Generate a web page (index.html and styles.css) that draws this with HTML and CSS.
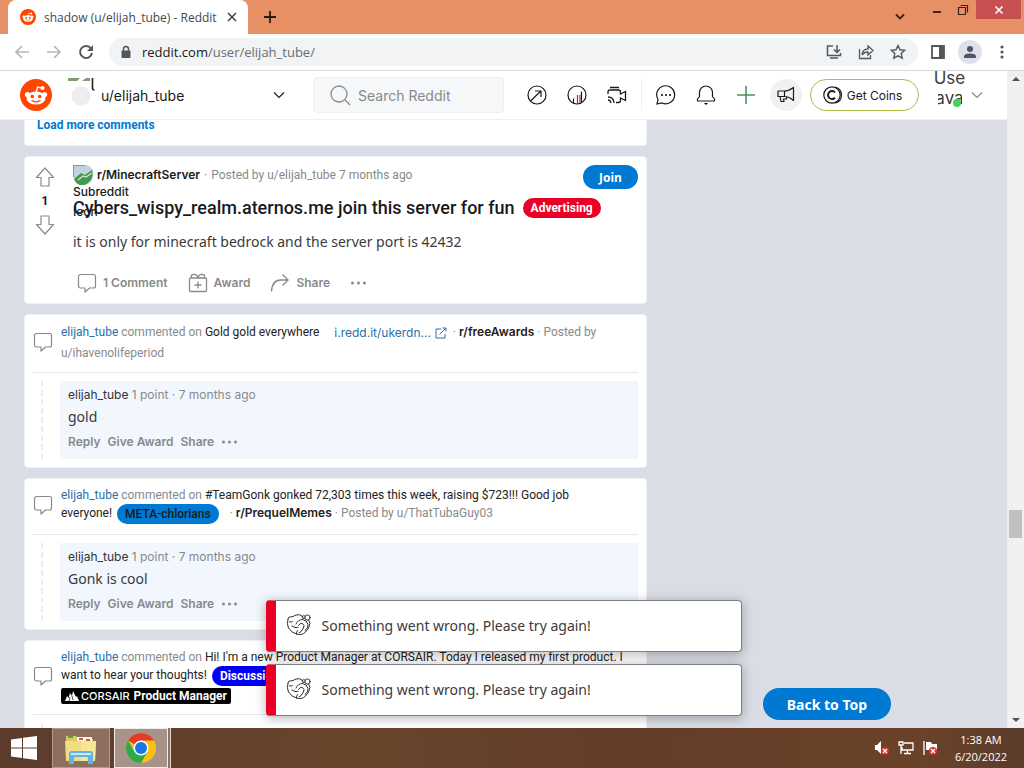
FILE: index.html
```html
<!DOCTYPE html>
<html lang="en">
<head>
    <meta charset="UTF-8">
    <meta name="viewport" content="width=device-width, initial-scale=1.0">
    <title>shadow (u/elijah_tube) - Reddit</title>
    <link rel="stylesheet" href="styles.css">
</head>
<body>
    <!-- Shared icons -->
    <svg class="sprite" aria-hidden="true">
        <symbol id="snoo" viewBox="0 0 32 32">
            <circle cx="16" cy="16" r="16" fill="#ff4500"/>
            <path d="M16 14l1.500-6 4.500 1" fill="none" stroke="#fff" stroke-width="1.300"/>
            <circle cx="22.500" cy="9" r="2" fill="#fff"/>
            <circle cx="7.500" cy="15.500" r="2.600" fill="#fff"/>
            <circle cx="24.500" cy="15.500" r="2.600" fill="#fff"/>
            <ellipse cx="16" cy="19" rx="9.500" ry="6.600" fill="#fff"/>
            <circle cx="12.300" cy="17.500" r="1.800" fill="#ff4500"/>
            <circle cx="19.700" cy="17.500" r="1.800" fill="#ff4500"/>
            <path d="M12 21.500q4 2.800 8 0" fill="none" stroke="#ff4500" stroke-width="1.200" stroke-linecap="round"/>
        </symbol>
        <symbol id="comment" viewBox="0 0 20 20">
            <path d="M3.500 1.500h13a2 2 0 0 1 2 2v9.500a2 2 0 0 1-2 2h-4l-4.500 4v-4H3.500a2 2 0 0 1-2-2V3.500a2 2 0 0 1 2-2z" fill="none" stroke="currentColor" stroke-width="1.200" stroke-linejoin="round"/>
        </symbol>
        <symbol id="arrow" viewBox="0 0 20 20">
            <path d="M10 1l8.500 9.500h-4.500V19H6v-8.500H1.500z" fill="none" stroke="currentColor" stroke-width="1.200" stroke-linejoin="round"/>
        </symbol>
        <symbol id="dots" viewBox="0 0 18 6">
            <circle cx="2.500" cy="3" r="1.500" fill="currentColor"/>
            <circle cx="8.500" cy="3" r="1.500" fill="currentColor"/>
            <circle cx="14.500" cy="3" r="1.500" fill="currentColor"/>
        </symbol>
        <symbol id="chevron" viewBox="0 0 14 14">
            <path d="M2 4.500l5 5 5-5" fill="none" stroke="currentColor" stroke-width="1.200"/>
        </symbol>
        <symbol id="masks" viewBox="0 0 26 24">
            <g fill="none" stroke="#333" stroke-width="1" stroke-linecap="round" stroke-linejoin="round">
                <path d="M2 6q0-2 2-2 3 0 6-2 4-1 6 1l1 2"/>
                <path d="M2 6q-1.500 5 .500 9 3 5 8 6"/>
                <path d="M10.500 21q-.500-2 1-3.500M3.500 9q2 .500 3-.500M6 13q3 2.500 6 1.500"/>
                <path d="M10 11q2-4.500 6.500-4.500 4.500.500 5.500 5 .500 4-3 6"/>
                <path d="M12.500 12.500q1.500-3 4-2 2.500 1.500 1 4.500-2 4-4.500 5"/>
                <path d="M10.500 21q5 2 9-2 4-3.500 4.500-9l-1.500-3"/>
                <circle cx="21.500" cy="4.500" r="2.600"/>
                <path d="M16 3.500q1.500-1.500 3-.500M17 5.500l2-.500"/>
            </g>
        </symbol>
    </svg>

    <div class="tab-strip">
        <div class="tab">
            <svg class="favicon"><use href="#snoo"/></svg>
            <span class="tab-title">shadow (u/elijah_tube) - Reddit</span>
            <button class="plain-btn tab-close" aria-label="Close tab">
                <svg width="10" height="10" viewBox="0 0 10 10"><path d="M1 1l8 8M9 1L1 9" stroke="#3c4043" stroke-width="1.500"/></svg>
            </button>
        </div>
        <button class="plain-btn new-tab" aria-label="New tab">
            <svg width="12" height="12" viewBox="0 0 12 12"><path d="M6 0v12M0 6h12" stroke="#2b1a12" stroke-width="1.800"/></svg>
        </button>
        <div class="window-controls">
            <button class="plain-btn tab-search" aria-label="Search tabs">
                <svg width="10" height="8" viewBox="0 0 10 8"><path d="M1 1.500l4 4 4-4" fill="none" stroke="#43210f" stroke-width="1.800"/></svg>
            </button>
            <button class="plain-btn window-btn" aria-label="Minimize">
                <svg width="10" height="10" viewBox="0 0 10 10"><path d="M1 7h8" stroke="#43210f" stroke-width="2"/></svg>
            </button>
            <button class="plain-btn window-btn" aria-label="Restore">
                <svg width="12" height="12" viewBox="0 0 12 12"><path d="M1.500 3.500h7v7h-7zM3.500 1.500h7v7" fill="none" stroke="#43210f" stroke-width="1.200"/></svg>
            </button>
            <button class="plain-btn close-btn" aria-label="Close window">
                <svg width="10" height="10" viewBox="0 0 10 10"><path d="M1.500 1.500l7 7M8.500 1.500l-7 7" stroke="#fff" stroke-width="1.600"/></svg>
            </button>
        </div>
    </div>

    <div class="toolbar">
        <button class="plain-btn tool-btn" aria-label="Back">
            <svg width="16" height="16" viewBox="0 0 16 16"><path d="M15 8H2M8 2L2 8l6 6" fill="none" stroke="#b4b6b9" stroke-width="1.700"/></svg>
        </button>
        <button class="plain-btn tool-btn" aria-label="Forward">
            <svg width="16" height="16" viewBox="0 0 16 16"><path d="M1 8h13M8 2l6 6-6 6" fill="none" stroke="#b4b6b9" stroke-width="1.700"/></svg>
        </button>
        <button class="plain-btn tool-btn" aria-label="Reload">
            <svg width="16" height="16" viewBox="0 0 16 16"><path d="M13 4.500A6 6 0 1 0 14 9" fill="none" stroke="#54585c" stroke-width="2"/><path d="M15 1v6H9z" fill="#54585c"/></svg>
        </button>
        <div class="omnibox">
            <svg width="12" height="14" viewBox="0 0 12 14"><path d="M3.500 6V4a2.500 2.500 0 0 1 5 0v2" fill="none" stroke="#54585c" stroke-width="1.500"/><rect x="1.500" y="5.500" width="9" height="7.500" rx="1" fill="#54585c"/></svg>
            <a class="url" href="#">reddit.com<span>/user/elijah_tube/</span></a>
            <button class="plain-btn tool-btn" aria-label="Install">
                <svg width="16" height="16" viewBox="0 0 16 16" fill="none" stroke="#54585c" stroke-width="1.500"><path d="M7 2H1.500v9.500h13V9M11 1v7M8 5.500l3 3 3-3M4 14h8"/></svg>
            </button>
            <button class="plain-btn tool-btn" aria-label="Share page">
                <svg width="16" height="16" viewBox="0 0 16 16" fill="none" stroke="#54585c" stroke-width="1.300"><path d="M1.500 5v9.500h11V11M4 11q.500-6 6-6V2l5 4.500-5 4.500V8Q6 8 4 11z"/></svg>
            </button>
            <button class="plain-btn tool-btn" aria-label="Bookmark">
                <svg width="16" height="16" viewBox="0 0 16 16"><path d="M8 1.500l2 4.300 4.600.500-3.400 3.200 1 4.700L8 11.800l-4.200 2.400 1-4.700L1.400 6.300 6 5.800z" fill="none" stroke="#54585c" stroke-width="1.400"/></svg>
            </button>
        </div>
        <button class="plain-btn tool-btn" aria-label="Side panel">
            <svg width="14" height="14" viewBox="0 0 14 14"><path d="M1 1h12v12H1z" fill="none" stroke="#54585c" stroke-width="1.800"/><path d="M8 1h5v12H8z" fill="#54585c"/></svg>
        </button>
        <button class="plain-btn profile-btn" aria-label="Profile">
            <svg width="14" height="14" viewBox="0 0 14 14" fill="#4a5568"><circle cx="7" cy="4" r="3"/><path d="M1 13v-1.500Q1 8.500 7 8.500t6 3V13z"/></svg>
        </button>
        <button class="plain-btn tool-btn" aria-label="Menu">
            <svg width="4" height="14" viewBox="0 0 4 14" fill="#54585c"><circle cx="2" cy="2" r="1.600"/><circle cx="2" cy="7" r="1.600"/><circle cx="2" cy="12" r="1.600"/></svg>
        </button>
    </div>

    <div class="viewport">
        <div class="page">
            <header class="site-header">
                <a href="#" class="logo" aria-label="Home"><svg><use href="#snoo"/></svg></a>
                <button class="plain-btn community-menu">
                    <span class="community-icon">
                        <svg width="28" height="30" viewBox="0 0 28 30"><circle cx="13" cy="19" r="9.500" fill="#ededf0"/><path d="M0 1h12l-3 3H0zM14 4l4-3h4v3z" fill="#7d9f6a"/><path d="M24.500 1v10q0 2 2 2" fill="none" stroke="#222" stroke-width="1.600"/></svg>
                    </span>
                    <span class="community-name">u/elijah_tube</span>
                    <svg width="14" height="14"><use href="#chevron"/></svg>
                </button>
                <form class="search" role="search">
                    <label for="search">
                        <svg width="22" height="22" viewBox="0 0 22 22" fill="none" stroke="#878a8c" stroke-width="1.300" aria-label="Search"><circle cx="10" cy="10" r="8"/><path d="M16 16l5 5"/></svg>
                    </label>
                    <input id="search" type="text" placeholder="Search Reddit">
                </form>
                <nav class="nav-icons">
                    <button class="plain-btn icon-btn" aria-label="Popular">
                        <svg width="20" height="20" viewBox="0 0 20 20" fill="none" stroke="#1a1a1b" stroke-width="1.200"><circle cx="10" cy="10" r="9"/><path d="M3.500 16L14 6M8 6h6v6"/></svg>
                    </button>
                    <button class="plain-btn icon-btn" aria-label="All">
                        <svg width="20" height="20" viewBox="0 0 20 20" fill="none" stroke="#1a1a1b" stroke-width="1.200"><circle cx="10" cy="10" r="9"/><path d="M6.500 18v-4.500M14.500 17V6.500"/><path d="M10.500 19v-9M13 18v-8" stroke="#9c3340"/></svg>
                    </button>
                    <button class="plain-btn icon-btn" aria-label="Reddit Live">
                        <svg width="20" height="20" viewBox="0 0 20 20" fill="none" stroke="#1a1a1b" stroke-width="1.300"><path d="M3 2.500h9M1 9V7q0-2 2-2h8.500q2 0 2 2v2l5-2.500v9L13.500 13v2.500q0 2-2 2H9M1 12q5.500 0 6 6M1 15q2.500 0 3 3"/></svg>
                    </button>
                    <span class="nav-divider"></span>
                    <button class="plain-btn icon-btn" aria-label="Chat">
                        <svg width="20" height="20" viewBox="0 0 20 20"><path d="M1 19l1-4.500a9 9 0 1 1 4 3.500z" fill="none" stroke="#1a1a1b" stroke-width="1.200"/><circle cx="6" cy="10" r="1"/><circle cx="10" cy="10" r="1"/><circle cx="14" cy="10" r="1"/></svg>
                    </button>
                    <button class="plain-btn icon-btn" aria-label="Notifications">
                        <svg width="20" height="20" viewBox="0 0 20 20"><path d="M1.500 16v-2l2-2.500V7.500a6.500 6.500 0 0 1 13 0v4l2 2.500v2z" fill="none" stroke="#1a1a1b" stroke-width="1.200" stroke-linejoin="round"/><path d="M8 18h4l-2 2z"/></svg>
                    </button>
                    <button class="plain-btn icon-btn" aria-label="Create post">
                        <svg width="18" height="18" viewBox="0 0 18 18"><path d="M9 0v18" stroke="#3f7f8c" stroke-width="1.500"/><path d="M0 9h18" stroke="#4f8f4a" stroke-width="1.500"/></svg>
                    </button>
                    <button class="plain-btn icon-btn filled" aria-label="Advertise">
                        <svg width="20" height="20" viewBox="0 0 20 20" fill="none" stroke="#1a1a1b" stroke-width="1.200" stroke-linejoin="round"><path d="M2 6h6q5 0 9.500-3.500v13q-4.500-4-9-4H2zM8.500 6v5.500M4 11.500l1 5h3l-.500-2.500h3v-2.500"/></svg>
                    </button>
                    <button class="coins-btn">
                        <svg width="20" height="20" viewBox="0 0 20 20" fill="none" stroke="#1a1a1b" stroke-width="1.200"><circle cx="9" cy="10" r="8.200"/><path d="M12 2q6.500 1.500 6.500 8T12 18"/><path d="M12 7.300a4 4 0 1 0 0 5.400" stroke-width="2"/></svg>
                        Get Coins
                    </button>
                </nav>
                <button class="plain-btn user-menu">
                    <span class="avatar"><span>Use</span><span class="avatar-rest">ava</span></span>
                    <span class="online-dot"></span>
                    <svg width="14" height="14"><use href="#chevron"/></svg>
                </button>
            </header>

            <main class="content">
                <div class="feed">
                    <section class="card load-more">
                        <a href="#">Load more comments</a>
                    </section>

                    <article class="card post">
                        <div class="votes">
                            <button class="plain-btn" aria-label="Upvote"><svg width="20" height="20"><use href="#arrow"/></svg></button>
                            <span>1</span>
                            <button class="plain-btn" aria-label="Downvote"><svg class="down" width="20" height="20"><use href="#arrow"/></svg></button>
                        </div>
                        <div class="post-body">
                            <div class="post-meta">
                                <span class="subreddit-icon">
                                    <svg width="20" height="20" viewBox="0 0 20 20"><path d="M0 0h12a8 8 0 0 1 8 10 10 10 0 0 1-15 9Q0 15 0 10z" fill="#c3d3de"/><path d="M0 .500h12M.500 0v12" stroke="#8b959c"/><path d="M1 14l7-6 4 2 7-5q2 7-2 11-4 5-10 4-4-1-6-6z" fill="#3f9a4c"/><path d="M5 15l5-4 3 1 6-4" fill="none" stroke="#d5e6d4" stroke-width="1.200"/></svg>
                                    <span class="icon-alt">Subreddit Icon</span>
                                </span>
                                <a href="#" class="subreddit">r/MinecraftServer</a>
                                <span class="sep">·</span>
                                <span>Posted by u/elijah_tube 7 months ago</span>
                                <button class="pill-btn join-btn">Join</button>
                            </div>
                            <h2 class="post-title">Cybers_wispy_realm.aternos.me join this server for fun <span class="flair flair-red">Advertising</span></h2>
                            <p class="post-text">it is only for minecraft bedrock and the server port is 42432</p>
                            <div class="post-actions">
                                <button class="plain-btn"><svg width="20" height="20"><use href="#comment"/></svg>1 Comment</button>
                                <button class="plain-btn">
                                    <svg width="20" height="20" viewBox="0 0 20 20" fill="none" stroke="currentColor" stroke-width="1.300"><rect x="1.500" y="5" width="17" height="13.500" rx="1"/><path d="M10 8.500v7M6.500 12h7M10 5Q9 1 5.500 1.500T4 5M10 5q1-4 4.500-3.500T16 5"/></svg>
                                    Award
                                </button>
                                <button class="plain-btn">
                                    <svg width="20" height="20" viewBox="0 0 20 20" fill="none" stroke="currentColor" stroke-width="1.300"><path d="M1.500 18.500Q2 7 11 7h7M12.500 1.500L18 7l-5.500 5.500"/></svg>
                                    Share
                                </button>
                                <button class="plain-btn" aria-label="More"><svg width="18" height="6"><use href="#dots"/></svg></button>
                            </div>
                        </div>
                    </article>

                    <article class="card">
                        <div class="comment-head">
                            <svg width="20" height="20"><use href="#comment"/></svg>
                            <p><a href="#">elijah_tube</a> commented on <a href="#" class="title">Gold gold everywhere</a> <a href="#" class="outbound">i.redd.it/ukerdn... <svg width="12" height="12" viewBox="0 0 12 12" fill="none" stroke="currentColor"><path d="M6 2H1v9h9V7M4.500 7.500L11 1M7.500 1H11v3.500"/></svg></a> · <a href="#" class="subreddit">r/freeAwards</a> · Posted by<br>u/ihavenolifeperiod</p>
                        </div>
                        <div class="thread">
                            <div class="comment">
                                <div class="comment-meta"><a href="#">elijah_tube</a> 1 point · 7 months ago</div>
                                <p>gold</p>
                                <div class="comment-actions">
                                    <button class="plain-btn">Reply</button>
                                    <button class="plain-btn">Give Award</button>
                                    <button class="plain-btn">Share</button>
                                    <button class="plain-btn" aria-label="More"><svg width="18" height="6"><use href="#dots"/></svg></button>
                                </div>
                            </div>
                        </div>
                    </article>

                    <article class="card">
                        <div class="comment-head">
                            <svg width="20" height="20"><use href="#comment"/></svg>
                            <p><a href="#">elijah_tube</a> commented on <a href="#" class="title">#TeamGonk gonked 72,303 times this week, raising $723!!! Good job<br>everyone!</a> <span class="flair flair-blue">META-chlorians</span> <span class="spaced">·</span> <a href="#" class="subreddit">r/PrequelMemes</a> · Posted by u/ThatTubaGuy03</p>
                        </div>
                        <div class="thread">
                            <div class="comment">
                                <div class="comment-meta"><a href="#">elijah_tube</a> 1 point · 7 months ago</div>
                                <p>Gonk is cool</p>
                                <div class="comment-actions">
                                    <button class="plain-btn">Reply</button>
                                    <button class="plain-btn">Give Award</button>
                                    <button class="plain-btn">Share</button>
                                    <button class="plain-btn" aria-label="More"><svg width="18" height="6"><use href="#dots"/></svg></button>
                                </div>
                            </div>
                        </div>
                    </article>

                    <article class="card">
                        <div class="comment-head">
                            <svg width="20" height="20"><use href="#comment"/></svg>
                            <p><a href="#">elijah_tube</a> commented on <a href="#" class="title">Hi! I'm a new Product Manager at CORSAIR. Today I released my first product. I<br>want to hear your thoughts!</a> <span class="flair flair-navy">Discussion</span><br><span class="badge"><svg width="14" height="10" viewBox="0 0 14 10" fill="#fff"><path d="M0 10l2-5 1.500 2L5 2l2 3 1-5 3 6 1-1 2 5z"/><path d="M4 10l1-4M8 9L7 5" stroke="#000" stroke-width=".7"/></svg><span class="brand">CORSAIR</span>Product Manager</span></p>
                        </div>
                        <div class="thread"></div>
                    </article>
                </div>

                <aside class="sidebar">
                    <button class="pill-btn top-btn">Back to Top</button>
                </aside>
            </main>

            <div class="toasts">
                <div class="toast" role="alert"><svg width="26" height="24"><use href="#masks"/></svg>Something went wrong. Please try again!</div>
                <div class="toast" role="alert"><svg width="26" height="24"><use href="#masks"/></svg>Something went wrong. Please try again!</div>
            </div>
        </div>

        <div class="scrollbar">
            <span class="scroll-up"></span>
            <span class="scroll-thumb"></span>
            <span class="scroll-down"></span>
        </div>
    </div>

    <footer class="taskbar">
        <button class="plain-btn start-btn" aria-label="Start">
            <svg width="26" height="24" viewBox="0 0 26 24" fill="#fff"><path d="M0 3.500l11-1.500v9.500H0zM12 1.800L26 0v11.500H12zM0 12.500h11V22L0 20.500zM12 12.500h14V24l-14-1.800z"/></svg>
        </button>
        <button class="plain-btn task-btn" aria-label="File Explorer">
            <svg width="34" height="32" viewBox="0 0 34 32">
                <path d="M2 4h10l2 3h15v4H2z" fill="#e2c75c"/>
                <path d="M4 3h5v3H4z" fill="#4f9e52"/><path d="M13 5h15v5H13z" fill="#fff4e0"/><path d="M15 6h4v2h-4zM22 7h4v2h-4z" fill="#c65f3e"/>
                <path d="M1 9h31l-1 20H2z" fill="#f3dd83"/>
                <path d="M17 9h15l-1 20H17z" fill="#f7e69a"/>
                <path d="M5 32V22q0-3 3-3h18q3 0 3 3v10h-5v-6q0-1-1-1H11q-1 0-1 1v6z" fill="#62b4e6"/>
                <path d="M7 22h20" stroke="#c9e8f8" stroke-width="2"/>
            </svg>
        </button>
        <button class="plain-btn task-btn active" aria-label="Google Chrome">
            <svg width="32" height="32" viewBox="0 0 32 32">
                <circle cx="16" cy="16" r="15" fill="#fbc116"/>
                <path d="M16 16L3 8.500A15 15 0 0 1 29 8.500H16z" fill="#e33b2e"/>
                <path d="M3 8.500A15 15 0 0 0 16 31l6.500-11.200L16 16l-6.500 3.800z" fill="#2da94f"/>
                <circle cx="16" cy="16" r="7.500" fill="#fff"/>
                <circle cx="16" cy="16" r="6" fill="#1a73e8"/>
            </svg>
        </button>
        <div class="tray">
            <svg width="16" height="16" viewBox="0 0 16 16"><path d="M1 5h2l4-4v13l-4-4H1z" fill="#fff"/><circle cx="11" cy="11" r="4" fill="#d8342c"/><path d="M9 9l4 4M13 9l-4 4" stroke="#fff" stroke-width="1.300"/></svg>
            <svg width="16" height="16" viewBox="0 0 16 16" fill="none" stroke="#fff" stroke-width="1.300"><path d="M6 3h9v7H4V7M9.500 10v3M6 13.500h7M1 2h4v3H1zM3 5v9"/></svg>
            <svg width="16" height="16" viewBox="0 0 16 16"><path d="M2 1v14" stroke="#fff" stroke-width="1.300"/><path d="M4 2h5l1 2h5v6H4z" fill="#fff"/><circle cx="11" cy="11" r="4" fill="#d8342c"/><path d="M9 9l4 4M13 9l-4 4" stroke="#fff" stroke-width="1.300"/></svg>
        </div>
        <div class="clock">
            <span>1:38 AM</span>
            <span>6/20/2022</span>
        </div>
    </footer>
</body>
</html>
```

FILE: styles.css
```css
:root {
    --orange: #e89065;
    --blue: #0079d3;
    --red: #ea0027;
    --page-bg: #dadde5;
    --ink: #1a1a1b;
    --muted: #878a8c;
    --line: #edeff1;
    --ui-font: "Inter", sans-serif;
    --feed-font: "Roboto", sans-serif;
    --body-font: "Noto Sans", sans-serif;
    --system-font: "Open Sans", sans-serif;
}

* {
    box-sizing: border-box;
}

body {
    margin: 0;
    height: 100vh;
    display: flex;
    flex-direction: column;
    overflow: hidden;
    font-family: var(--ui-font);
    font-size: 12px;
    color: var(--ink);
}

a {
    color: inherit;
    text-decoration: none;
}

p,
h2 {
    margin: 0;
}

svg {
    flex-shrink: 0;
}

.sprite {
    position: absolute;
    width: 0;
    height: 0;
}

.plain-btn {
    display: flex;
    align-items: center;
    justify-content: center;
    padding: 0;
    border: none;
    background: none;
    color: inherit;
    font: inherit;
    cursor: pointer;
}

/* Browser window */
.tab-strip {
    display: flex;
    flex-shrink: 0;
    height: 34px;
    padding-left: 8px;
    background: var(--orange);
    font-family: var(--system-font);
}

.tab {
    display: flex;
    align-items: center;
    width: 240px;
    padding: 0 10px 0 12px;
    background: white;
    border-radius: 8px 8px 0 0;
    color: #45484b;
}

.favicon {
    width: 16px;
    height: 16px;
    margin-right: 8px;
}

.tab-title {
    flex: 1;
    white-space: nowrap;
}

.tab-close {
    width: 12px;
    height: 16px;
}

.new-tab {
    width: 44px;
}

.window-controls {
    display: flex;
    align-items: flex-start;
    margin-left: auto;
    padding-right: 3px;
}

.tab-search {
    width: 24px;
    height: 34px;
    margin-right: 12px;
}

.window-btn {
    width: 26px;
    height: 19px;
}

.close-btn {
    width: 45px;
    height: 19px;
    background: #c75050;
}

.toolbar {
    display: flex;
    align-items: center;
    flex-shrink: 0;
    gap: 8px;
    height: 37px;
    padding: 0 10px;
    background: white;
    border-bottom: 1px solid #d5d7da;
}

.tool-btn {
    width: 24px;
    height: 24px;
}

.omnibox {
    display: flex;
    flex: 1;
    align-items: center;
    gap: 8px;
    height: 28px;
    margin-left: 3px;
    padding: 0 8px 0 11px;
    background: #f1f3f4;
    border-radius: 14px;
    font-family: var(--system-font);
    font-size: 13px;
}

.url {
    flex: 1;
    margin-left: 2px;
}

.url span {
    color: #696c70;
}

.profile-btn {
    width: 24px;
    height: 24px;
    border-radius: 50%;
    background: #dfe1e8;
}

.viewport {
    display: flex;
    flex: 1;
    min-height: 0;
}

.page {
    position: relative;
    display: flex;
    flex: 1;
    flex-direction: column;
    min-width: 0;
    background: var(--page-bg);
}

.scrollbar {
    display: flex;
    flex-direction: column;
    align-items: center;
    width: 17px;
    padding: 6px 0;
    background: #f0f0f0;
}

.scroll-up,
.scroll-down {
    border: 4px solid transparent;
}

.scroll-up {
    border-top: none;
    border-bottom-color: #505050;
}

.scroll-down {
    border-bottom: none;
    border-top-color: #505050;
    margin-top: auto;
}

.scroll-thumb {
    width: 13px;
    height: 28px;
    margin-top: 429px;
    background: #c1c1c1;
}

/* Site header */
.site-header {
    display: flex;
    align-items: center;
    flex-shrink: 0;
    height: 49px;
    padding: 0 20px;
    background: white;
    border-bottom: 1px solid var(--line);
}

.logo {
    height: 32px;
    margin-right: 16px;
}

.logo svg {
    width: 32px;
    height: 32px;
}

.community-menu {
    width: 218px;
    height: 36px;
    margin-right: 27px;
    font-size: 14px;
}

.community-icon {
    height: 36px;
    margin-right: 5px;
}

.community-name {
    flex: 1;
    text-align: left;
}

.search {
    display: flex;
    flex: 1;
    align-items: center;
    min-width: 0;
    height: 36px;
    margin-right: 17px;
    padding-left: 15px;
    background: #f6f7f8;
    border: 1px solid var(--line);
    border-radius: 4px;
}

.search label {
    height: 22px;
    margin-right: 7px;
}

.search input {
    flex: 1;
    min-width: 0;
    padding: 0;
    border: none;
    outline: none;
    background: none;
    font-family: var(--ui-font);
    font-size: 14px;
}

.search input::placeholder {
    color: var(--muted);
}

.nav-icons {
    display: flex;
    align-items: center;
    gap: 8px;
}

.icon-btn {
    width: 32px;
    height: 32px;
    border-radius: 50%;
}

.icon-btn.filled {
    background: #f1f1f3;
}

.nav-divider {
    width: 1px;
    height: 32px;
    background: var(--line);
}

.coins-btn {
    display: flex;
    align-items: center;
    justify-content: center;
    gap: 4px;
    width: 109px;
    height: 32px;
    padding: 0 4px 0 0;
    border: 1px solid #b0bf45;
    border-radius: 16px;
    background: white;
    color: var(--ink);
    font-family: var(--ui-font);
    font-size: 12px;
}

.user-menu {
    position: relative;
    align-self: stretch;
    align-items: flex-start;
    gap: 4px;
    width: 57px;
    margin-left: 11px;
    overflow: hidden;
    color: var(--muted);
}

.user-menu svg {
    margin-top: 17px;
}

.avatar {
    display: flex;
    flex-direction: column;
    align-items: center;
    width: 32px;
    margin-top: -3px;
    color: #3a3a3c;
    font-size: 17px;
    line-height: 20px;
}

.avatar-rest {
    display: flex;
    justify-content: center;
    width: 24px;
    overflow: hidden;
}

.online-dot {
    position: absolute;
    top: 28px;
    left: 23px;
    width: 8px;
    height: 8px;
    border-radius: 50%;
    background: #46d160;
}

/* Feed */
.content {
    display: flex;
    flex: 1;
    gap: 24px;
    min-height: 0;
    padding: 0 24px;
    overflow: hidden;
}

.feed {
    flex: 1;
    min-width: 0;
    font-family: var(--feed-font);
}

.sidebar {
    display: flex;
    align-items: flex-end;
    justify-content: center;
    width: 312px;
    padding-bottom: 8px;
}

.card {
    margin-bottom: 10px;
    background: white;
    border: 1px solid #f0f1f3;
    border-radius: 4px;
}

.load-more {
    height: 26px;
    padding-left: 12px;
    border-top: none;
    border-radius: 0 0 4px 4px;
    color: var(--blue);
    font-weight: 700;
    line-height: 10px;
}

.post {
    display: flex;
}

.votes {
    display: flex;
    flex-direction: column;
    align-items: center;
    gap: 6px;
    width: 40px;
    padding-top: 10px;
    color: var(--muted);
}

.votes span {
    color: var(--ink);
    font-weight: 700;
    line-height: 16px;
}

.votes .down {
    transform: rotate(180deg);
}

.post-body {
    flex: 1;
    padding: 8px;
}

.post-meta {
    display: flex;
    align-items: flex-start;
    gap: 4px;
    height: 24px;
    color: var(--muted);
    line-height: 20px;
}

.subreddit {
    color: #1c1c1c;
    font-family: var(--ui-font);
    font-weight: 600;
}

.subreddit-icon {
    position: relative;
    height: 20px;
}

.icon-alt {
    position: absolute;
    top: 17px;
    left: 0;
    width: 56px;
    color: var(--ink);
    font-family: var(--ui-font);
    font-weight: 500;
    line-height: 20px;
}

.pill-btn {
    border: none;
    border-radius: 16px;
    background: var(--blue);
    color: white;
    font-family: var(--body-font);
    font-size: 14px;
    font-weight: 700;
    cursor: pointer;
}

.join-btn {
    width: 55px;
    height: 24px;
    margin-left: auto;
    padding: 0;
    font-size: 12px;
}

.top-btn {
    width: 128px;
    height: 32px;
    padding: 0;
}

.post-title {
    display: flex;
    align-items: center;
    gap: 8px;
    margin-top: 8px;
    font-size: 18px;
    font-weight: 500;
    line-height: 22px;
    white-space: nowrap;
}

.flair {
    display: inline-block;
    height: 20px;
    padding: 0 8px;
    border-radius: 10px;
    font-size: 12px;
    font-weight: 500;
    line-height: 20px;
    vertical-align: middle;
}

.flair-red {
    background: var(--red);
    color: white;
    font-weight: 700;
}

.flair-blue {
    margin-left: 2px;
    background: var(--blue);
    color: var(--ink);
}

.flair-navy {
    margin-left: 2px;
    background: #0000f5;
    color: white;
    font-weight: 700;
}

.post-text {
    margin-top: 13px;
    color: #3a3a3c;
    font-family: var(--body-font);
    font-size: 14px;
    line-height: 20px;
}

.post-actions {
    display: flex;
    align-items: center;
    gap: 20px;
    margin-top: 19px;
    padding-left: 4px;
    color: var(--muted);
    font-family: var(--ui-font);
    font-weight: 600;
    line-height: 24px;
}

.post-actions .plain-btn {
    gap: 6px;
    height: 24px;
}

.comment-head {
    display: flex;
    align-items: center;
    gap: 8px;
    margin: 0 8px;
    padding: 7px 0 10px;
    border-bottom: 1px solid #e6e8ea;
    color: var(--muted);
}

.comment-head p {
    line-height: 18px;
    white-space: nowrap;
}

.comment-head a {
    color: #2a6fa8;
}

.comment-head .title,
.comment-head .subreddit {
    color: #222;
}

.comment-head .outbound {
    display: inline-flex;
    align-items: center;
    gap: 4px;
    height: 22px;
    margin: 0 3px 0 12px;
    font-family: var(--ui-font);
    vertical-align: middle;
}

.spaced {
    margin-left: 8px;
}

.thread {
    min-height: 78px;
    margin: 8px;
    padding-left: 27px;
    background: repeating-linear-gradient(#e9ebee 0 6px, white 6px 9px) 8px 0 / 2px 100% no-repeat;
}

.comment {
    padding: 6px 8px 9px;
    background: #f2f6fd;
}

.comment-meta {
    color: var(--muted);
    font-family: var(--ui-font);
    line-height: 16px;
}

.comment-meta a {
    color: #333;
}

.comment p {
    margin-top: 4px;
    color: #3a3a3c;
    font-family: var(--body-font);
    font-size: 14px;
    line-height: 20px;
}

.comment-actions {
    display: flex;
    gap: 7px;
    margin-top: 7px;
    color: var(--muted);
    font-family: var(--ui-font);
    font-weight: 600;
    line-height: 16px;
}

.badge {
    display: inline-flex;
    align-items: center;
    gap: 2px;
    height: 16px;
    padding: 0 4px;
    border-radius: 2px;
    background: black;
    color: white;
    font-weight: 700;
    line-height: 16px;
    vertical-align: middle;
}

.brand {
    margin-right: 2px;
    font-family: var(--ui-font);
    font-size: 11px;
    font-weight: 500;
}

/* Error toasts */
.toasts {
    position: absolute;
    bottom: 12px;
    left: 50%;
    display: flex;
    flex-direction: column;
    gap: 12px;
    width: 476px;
    transform: translateX(-50%);
}

.toast {
    display: flex;
    align-items: center;
    gap: 10px;
    height: 52px;
    padding: 0 0 2px 10px;
    background: white;
    border: 1px solid #7c8082;
    border-left: 10px solid var(--red);
    border-radius: 4px;
    box-shadow: 0 2px 12px rgba(0, 0, 0, 0.3);
    color: #3a3a3c;
    font-family: var(--body-font);
    font-size: 14px;
}

/* Windows taskbar */
.taskbar {
    display: flex;
    flex-shrink: 0;
    height: 40px;
    background: linear-gradient(90deg, #5c3c2b, #69452c 35%, #633d28 60%, #6b4229 90%, #5a3c2b);
    color: white;
    font-family: var(--system-font);
}

.start-btn {
    width: 48px;
}

.task-btn {
    width: 58px;
    margin-left: 4px;
    background: #8d6f5f;
    border: 1px solid #b29a8e;
}

.task-btn.active {
    width: 54px;
    background: #a8938a;
    border: 1px solid #f3ece8;
    box-shadow: 2px 0 #8d7468, 3px 0 #e0d6d0;
}

.tray {
    display: flex;
    align-items: center;
    gap: 8px;
    margin-left: auto;
}

.clock {
    display: flex;
    flex-direction: column;
    align-items: center;
    justify-content: center;
    width: 86px;
    font-size: 11px;
    line-height: 17px;
}
```
